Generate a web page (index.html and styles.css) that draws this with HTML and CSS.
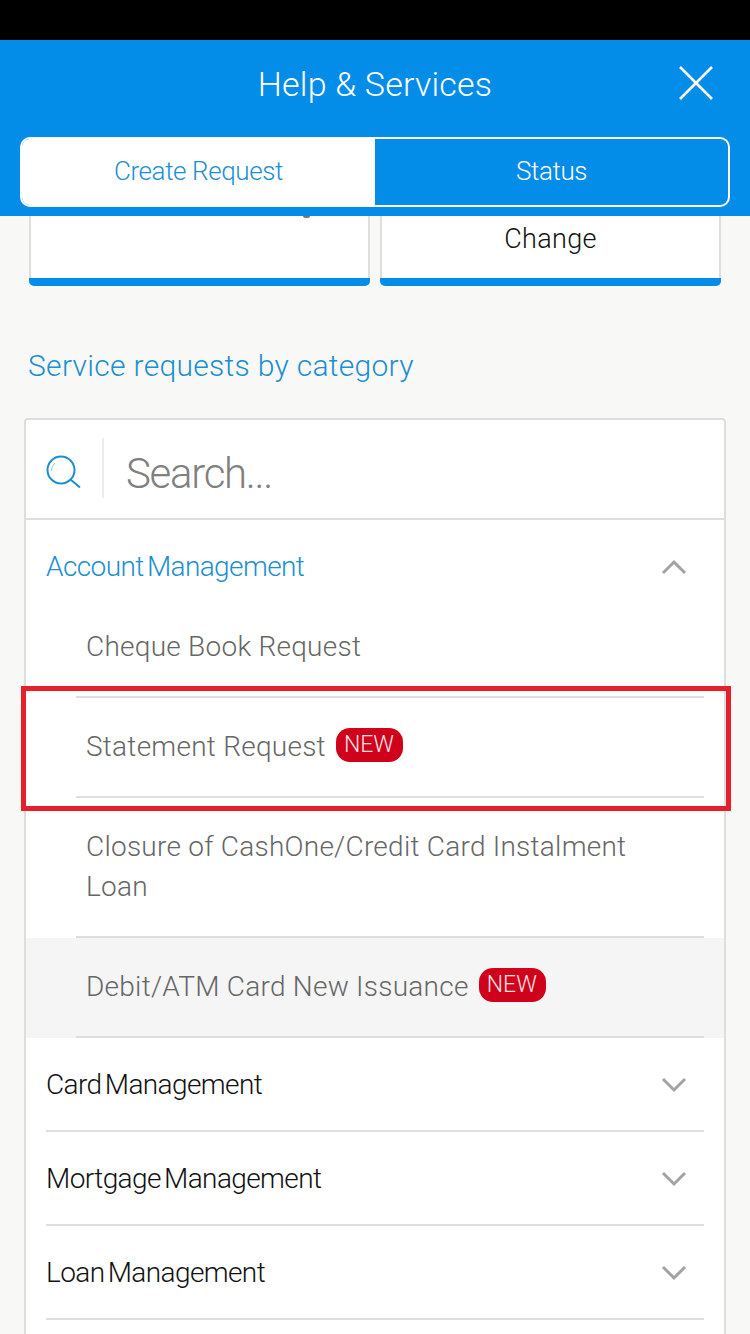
FILE: index.html
```html
<!DOCTYPE html>
<html lang="en">
<head>
    <meta charset="UTF-8">
    <meta name="viewport" content="width=device-width, initial-scale=1.0">
    <title>Help &amp; Services</title>
    <link rel="stylesheet" href="styles.css">
</head>
<body>
    <div class="status-bar"></div>

    <header class="top-bar">
        <div class="title-row">
            <h1 class="title">Help &amp; Services</h1>
            <svg class="close-icon" width="36" height="36" viewBox="0 0 36 36">
                <path d="M2 2 L34 34 M34 2 L2 34" fill="none" stroke="#fff" stroke-width="2.6"/>
            </svg>
        </div>
        <div class="tabs">
            <div class="tab tab-active">Create Request</div>
            <div class="tab">Status</div>
        </div>
    </header>

    <div class="quick-cards">
        <div class="quick-card">
            <div class="quick-body"><span class="cut-letter"></span></div>
            <div class="quick-bar"></div>
        </div>
        <div class="quick-card">
            <div class="quick-body"><span class="quick-label">Change</span></div>
            <div class="quick-bar"></div>
        </div>
    </div>

    <h2 class="section-title">Service requests by category</h2>

    <section class="panel">
        <div class="search-row">
            <div class="search-icon-box">
                <svg width="38" height="36" viewBox="0 0 38 36">
                    <circle cx="16" cy="16" r="13.5" fill="none" stroke="#1b8fd0" stroke-width="2"/>
                    <path d="M25.5 25.5 L35 33.5" fill="none" stroke="#1b8fd0" stroke-width="2"/>
                    <path d="M6.5 17 A10 10 0 0 1 10 9" fill="none" stroke="#8cc4e6" stroke-width="1"/>
                </svg>
            </div>
            <div class="search-text">Search...</div>
        </div>

        <div class="cat-head cat-open">
            <span>Account Management</span>
            <svg class="chevron" width="26" height="16" viewBox="0 0 26 16">
                <path d="M2 14 L13 3 L24 14" fill="none" stroke="#a3a3a3" stroke-width="3"/>
            </svg>
        </div>

        <div class="sub-list">
            <div class="sub-item"><div class="sub-inner">Cheque Book Request</div></div>
            <div class="sub-item"><div class="sub-inner">Statement Request <span class="new-badge">NEW</span></div></div>
            <div class="sub-item sub-tall"><div class="sub-inner">Closure of CashOne/Credit Card Instalment<br>Loan</div></div>
            <div class="sub-item sub-hover"><div class="sub-inner">Debit/ATM Card New Issuance <span class="new-badge">NEW</span></div></div>
        </div>

        <div class="cat-head">
            <span>Card Management</span>
            <svg class="chevron" width="26" height="16" viewBox="0 0 26 16">
                <path d="M2 2 L13 13 L24 2" fill="none" stroke="#a3a3a3" stroke-width="3"/>
            </svg>
        </div>
        <div class="cat-head">
            <span>Mortgage Management</span>
            <svg class="chevron" width="26" height="16" viewBox="0 0 26 16">
                <path d="M2 2 L13 13 L24 2" fill="none" stroke="#a3a3a3" stroke-width="3"/>
            </svg>
        </div>
        <div class="cat-head">
            <span>Loan Management</span>
            <svg class="chevron" width="26" height="16" viewBox="0 0 26 16">
                <path d="M2 2 L13 13 L24 2" fill="none" stroke="#a3a3a3" stroke-width="3"/>
            </svg>
        </div>
    </section>

    <div class="highlight-box"></div>
</body>
</html>
```

FILE: styles.css
```css
html, body {
    margin: 0;
    padding: 0;
}

body {
    position: relative;
    width: 750px;
    height: 1334px;
    overflow: hidden;
    background-color: #f8f8f6;
    font-family: Roboto, "Liberation Sans", Arial, sans-serif;
    font-weight: 300;
}

.status-bar {
    height: 40px;
    background-color: #000;
}

.top-bar {
    height: 176px;
    box-sizing: border-box;
    padding: 0 20px;
    background-color: #038ce8;
    color: #fff;
}

.title-row {
    position: relative;
    height: 97px;
    display: flex;
    align-items: center;
    justify-content: center;
}

.title {
    margin: 0 0 9px;
    font-size: 34px;
    font-weight: 300;
    letter-spacing: 0.2px;
}

.close-icon {
    position: absolute;
    right: 16px;
    top: 25px;
}

.tabs {
    display: flex;
    height: 70px;
    box-sizing: border-box;
    padding-bottom: 3px;
    border: 2px solid #fff;
    border-radius: 10px;
    overflow: hidden;
}

.tab {
    flex: 1;
    display: flex;
    align-items: center;
    justify-content: center;
    font-size: 26px;
    letter-spacing: -0.4px;
    margin-bottom: -3px;
    padding-bottom: 3px;
}

.tab-active {
    background-color: #fff;
    color: #1b8fd0;
}

.quick-cards {
    display: flex;
    gap: 10px;
    padding: 0 29px;
}

.quick-card {
    flex: 1;
}

.quick-body {
    position: relative;
    height: 62px;
    background-color: #fff;
    border: solid #dedede;
    border-width: 0 2px;
    text-align: center;
}

.quick-bar {
    height: 8px;
    background-color: #038ce8;
    border-radius: 0 0 5px 5px;
}

.quick-label {
    display: block;
    padding-top: 7px;
    font-size: 27px;
    line-height: 32px;
    letter-spacing: 0.3px;
    color: #111;
}

.cut-letter {
    position: absolute;
    left: 272px;
    top: 0;
    width: 7px;
    height: 2px;
    background-color: #777;
    border-radius: 0 0 3px 3px;
}

.section-title {
    margin: 62px 0 0 28px;
    font-size: 30px;
    line-height: 36px;
    font-weight: 300;
    letter-spacing: 0.3px;
    color: #1b8fd0;
}

.panel {
    margin: 34px 24px 0;
    padding-bottom: 60px;
    background-color: #fff;
    border: 2px solid #dedede;
    border-radius: 4px 4px 0 0;
}

.search-row {
    display: flex;
    height: 98px;
    border-bottom: 2px solid #dedede;
}

.search-icon-box {
    width: 78px;
    height: 60px;
    margin-top: 18px;
    box-sizing: border-box;
    padding: 16px 0 0 19px;
    border-right: 2px solid #ececec;
}

.search-text {
    padding: 29px 0 0 22px;
    font-size: 42px;
    line-height: 50px;
    letter-spacing: -1.3px;
    color: #808080;
}

.cat-head {
    display: flex;
    align-items: center;
    justify-content: space-between;
    height: 92px;
    margin: 0 20px;
    padding-right: 17px;
    border-bottom: 2px solid #dedede;
    font-size: 28px;
    letter-spacing: -0.6px;
    word-spacing: -3px;
    color: #111;
}

.cat-open {
    height: 78px;
    box-sizing: border-box;
    padding: 16px 17px 2px 0;
    border-bottom: 0;
    color: #1b8fd0;
}

.chevron {
    margin-top: 2px;
}

.sub-list {
    font-size: 28px;
    line-height: 40px;
    letter-spacing: 0.25px;
    color: #666;
}

.sub-item {
    padding: 0 20px 0 50px;
}

.sub-inner {
    height: 98px;
    display: flex;
    align-items: center;
    white-space: pre;
    padding-left: 10px;
    border-bottom: 2px solid #dedede;
}

.sub-tall .sub-inner {
    height: 140px;
    display: block;
    white-space: normal;
    box-sizing: border-box;
    padding-top: 29px;
}

.sub-hover {
    background-color: #f5f5f5;
}

.new-badge {
    margin: 0 0 4px 3px;
    padding: 0 9px 0 8px;
    height: 34px;
    line-height: 34px;
    border-radius: 14px;
    background-color: #d0021b;
    color: #f7e3e5;
    font-size: 23px;
    letter-spacing: 0;
}

.highlight-box {
    position: absolute;
    left: 21px;
    top: 686px;
    width: 700px;
    height: 115px;
    border: 5px solid #e5202a;
}
```
